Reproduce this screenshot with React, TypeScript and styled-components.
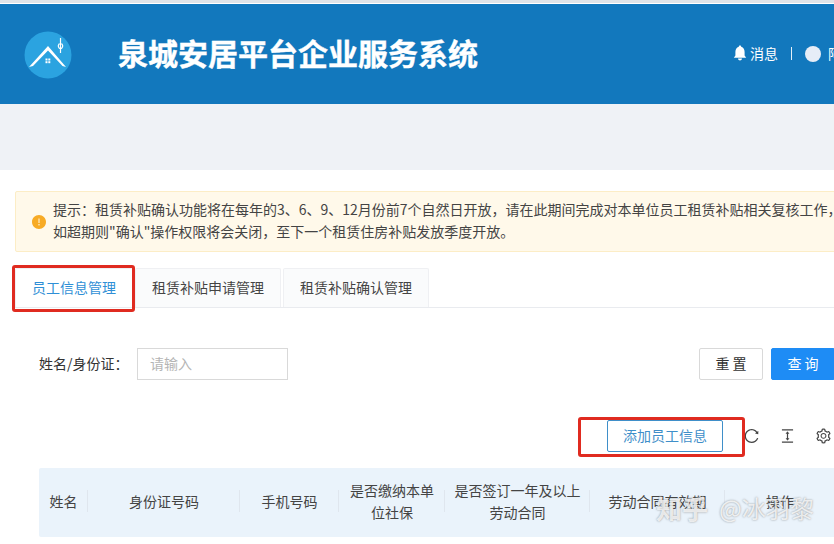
import styled, { createGlobalStyle } from "styled-components";
import {
  AiFillExclamationCircle,
  AiOutlineColumnHeight,
  AiOutlineReload,
  AiOutlineSetting,
} from "react-icons/ai";

const GlobalStyle = createGlobalStyle`
  html, body {
    margin: 0;
    width: 834px;
    height: 544px;
    overflow: hidden;
    background: #fff;
  }
  * {
    box-sizing: border-box;
  }
  body {
    font-family: "Noto Sans CJK SC", "Liberation Sans", sans-serif;
    color: #333;
  }
`;

const Page = styled.div`
  position: relative;
  width: 834px;
  height: 544px;
  overflow: hidden;
  background: #fff;
  padding-top: 4px;
`;

const TopLine = styled.div`
  height: 3px;
  margin-top: -4px;
  margin-bottom: 1px;
  background: #dfe3e8;
`;

const Header = styled.header`
  height: 100px;
  background: #1278bd;
  display: flex;
  align-items: center;
  padding-left: 24px;
  white-space: nowrap;
`;

const Logo = styled.svg`
  width: 48px;
  height: 48px;
  flex: none;
  margin-top: 2px;
`;

const Title = styled.h1`
  margin: -4px 0 0 46px;
  width: 615px;
  flex: none;
  font-size: 30px;
  line-height: 40px;
  font-weight: 700;
  color: #fff;
  -webkit-text-stroke: 0.4px #fff;
`;

const HeaderTools = styled.div`
  display: flex;
  align-items: center;
  color: #fff;
  font-size: 14px;
  flex: none;
  margin-top: -2px;
`;

const Bell = styled.svg`
  width: 14px;
  height: 16px;
  margin-right: 3px;
`;

const Divider = styled.span`
  width: 1px;
  height: 13px;
  background: #e4eff8;
  margin: 0 13px;
`;

const Avatar = styled.span`
  width: 16px;
  height: 16px;
  border-radius: 50%;
  background: #e6edf7;
  margin: 2px 7px 0 0;
`;

const Band = styled.div`
  height: 66px;
  background: #eff2f6;
`;

const Content = styled.main`
  padding: 21px 0 0 15px;
  width: 1100px;
`;

const Alert = styled.div`
  height: 61px;
  display: flex;
  align-items: center;
  gap: 6px;
  padding: 0 0 3px 15px;
  background: #fff9ea;
  border: 1px solid #fcedc6;
  border-radius: 2px;
  font-size: 14px;
  line-height: 22px;
  color: #444;
  white-space: nowrap;
`;

const AlertIcon = styled(AiFillExclamationCircle)`
  color: #f7ab25;
  font-size: 16px;
  flex: none;
  margin-top: 3px;
`;

const Tabs = styled.div`
  display: flex;
  align-items: flex-end;
  gap: 2px;
  height: 43px;
  margin-top: 13px;
  border-bottom: 1px solid #e9ebef;
`;

const Tab = styled.div<{ $active?: boolean }>`
  width: ${(p) => (p.$active ? "118px" : "146px")};
  height: 39px;
  display: flex;
  align-items: center;
  justify-content: center;
  padding-bottom: 2px;
  font-size: 14px;
  color: ${(p) => (p.$active ? "#2f8fd6" : "#444")};
  background: ${(p) => (p.$active ? "#fff" : "#fafbfc")};
  border: 1px solid #eff0f3;
  border-bottom: 0;
  border-radius: 2px 2px 0 0;
`;

const Filter = styled.div`
  display: flex;
  align-items: center;
  height: 32px;
  margin-top: 40px;
  padding-left: 24px;
`;

const FieldLabel = styled.label`
  font-size: 14px;
  color: #333;
  width: 98px;
  flex: none;
  padding-bottom: 2px;
`;

const FakeInput = styled.div`
  width: 151px;
  height: 32px;
  border: 1px solid #d9d9d9;
  padding-left: 12px;
  font-size: 14px;
  line-height: 29px;
  color: #b5b5b5;
  flex: none;
`;

const Button = styled.button<{ $primary?: boolean }>`
  width: 64px;
  height: 32px;
  flex: none;
  padding: 0 0 2px 3px;
  font-family: inherit;
  font-size: 14px;
  letter-spacing: 3px;
  border-radius: 2px;
  border: 1px solid ${(p) => (p.$primary ? "#1e8cf5" : "#d9d9d9")};
  background: ${(p) => (p.$primary ? "#1e8cf5" : "#fff")};
  color: ${(p) => (p.$primary ? "#fff" : "#333")};
  margin-left: ${(p) => (p.$primary ? "8px" : "0")};
`;

const ResetButton = styled(Button)`
  margin-left: 411px;
`;

const Toolbar = styled.div`
  display: flex;
  align-items: center;
  height: 32px;
  margin-top: 40px;
  padding-left: 592px;
  color: #444;
`;

const AddButton = styled.button`
  width: 116px;
  height: 32px;
  flex: none;
  padding: 0 0 3px;
  font-family: inherit;
  font-size: 14px;
  color: #3f8fc9;
  background: #fff;
  border: 1px solid #3f8fc9;
  border-radius: 2px;
  margin-right: 20px;
`;

const ToolIcon = styled.span`
  display: flex;
  justify-content: center;
  width: 17px;
  font-size: 18px;
  margin-right: 19px;
  flex: none;
`;

const TableHead = styled.div`
  display: flex;
  align-items: center;
  width: 900px;
  height: 69px;
  margin: 16px 0 0 24px;
  padding-bottom: 3px;
  background: #eaf3fb;
  border-radius: 2px 0 0 2px;
`;

const HeadCell = styled.div<{ $width: number }>`
  position: relative;
  width: ${(p) => p.$width}px;
  flex: none;
  padding: 0 6px;
  text-align: center;
  font-size: 14px;
  line-height: 22px;
  color: #444;

  &:not(:last-child)::after {
    content: "";
    position: absolute;
    right: 0;
    top: 50%;
    height: 22px;
    margin-top: -11px;
    width: 1px;
    background: #dfe6ee;
  }
`;

const Watermark = styled.div`
  position: absolute;
  left: 656px;
  top: 489px;
  display: flex;
  align-items: center;
  gap: 11px;
  white-space: nowrap;
  color: rgba(255, 255, 255, 0.78);
  text-shadow: 0 0 2px rgba(90, 90, 90, 0.65);
`;

const WatermarkBrand = styled.span`
  font-size: 26px;
  line-height: 38px;
  font-weight: 700;
`;

const WatermarkName = styled.span`
  font-size: 24px;
  line-height: 38px;
`;

const RedBox = styled.div<{ $left: number; $top: number; $width: number; $height: number }>`
  position: absolute;
  left: ${(p) => p.$left}px;
  top: ${(p) => p.$top}px;
  width: ${(p) => p.$width}px;
  height: ${(p) => p.$height}px;
  border: 3px solid #e02b20;
  border-radius: 3px;
`;

const columns = [
  { width: 49, label: "姓名" },
  { width: 152, label: "身份证号码" },
  { width: 99, label: "手机号码" },
  { width: 106, label: "是否缴纳本单位社保" },
  { width: 145, label: "是否签订一年及以上劳动合同" },
  { width: 135, label: "劳动合同有效期" },
  { width: 110, label: "操作" },
];

// 全角标点
const notice1 =
  "提示\uFF1A租赁补贴确认功能将在每年的3、6、9、12月份前7个自然日开放\uFF0C请在此期间完成对本单位员工租赁补贴相关复核工作\uFF0C";
const notice2 = "如超期则\"确认\"操作权限将会关闭\uFF0C至下一个租赁住房补贴发放季度开放。";

export default function App() {
  return (
    <Page>
      <GlobalStyle />
      <TopLine />
      <Header>
        <Logo viewBox="0 0 48 48">
          <circle cx="24" cy="24" r="23.5" fill="#2ba3e0" />
          <path d="M5 36 L24 15 L42 36 L38.5 35 L24 19.5 L9 35 Z" fill="#fff" />
          <rect x="21.5" y="27.5" width="2" height="2" fill="#fff" />
          <rect x="24.3" y="27.5" width="2" height="2" fill="#fff" />
          <rect x="21.5" y="30.2" width="2" height="2" fill="#fff" />
          <rect x="24.3" y="30.2" width="2" height="2" fill="#fff" />
          <path
            d="M36.5 7 L36.5 22 M35 13 C33.5 15 34.5 17 36.5 18 C38.5 17 39.5 15 38 13 Z"
            fill="none"
            stroke="#fff"
            strokeWidth="1.2"
          />
        </Logo>
        <Title>泉城安居平台企业服务系统</Title>
        <HeaderTools>
          <Bell viewBox="0 0 14 16">
            <path
              d="M7 0.5 C7.8 0.5 8.2 1 8.2 1.8 C10.6 2.5 11.6 4.5 11.6 7 L11.6 10.5 L13.2 12.8 L0.8 12.8 L2.4 10.5 L2.4 7 C2.4 4.5 3.4 2.5 5.8 1.8 C5.8 1 6.2 0.5 7 0.5 Z M5 13.6 L9 13.6 C8.8 15 8 15.5 7 15.5 C6 15.5 5.2 15 5 13.6 Z"
              fill="#fff"
            />
          </Bell>
          消息
          <Divider />
          <Avatar />
          阿
        </HeaderTools>
      </Header>
      <Band />
      <Content>
        <Alert>
          <AlertIcon />
          <div>
            <div>{notice1}</div>
            <div>{notice2}</div>
          </div>
        </Alert>
        <Tabs>
          <Tab $active>员工信息管理</Tab>
          <Tab>租赁补贴申请管理</Tab>
          <Tab>租赁补贴确认管理</Tab>
        </Tabs>
        <Filter>
          <FieldLabel>{"姓名/身份证\uFF1A"}</FieldLabel>
          <FakeInput>请输入</FakeInput>
          <ResetButton>重置</ResetButton>
          <Button $primary>查询</Button>
        </Filter>
        <Toolbar>
          <AddButton>添加员工信息</AddButton>
          <ToolIcon>
            <AiOutlineReload />
          </ToolIcon>
          <ToolIcon>
            <AiOutlineColumnHeight />
          </ToolIcon>
          <ToolIcon>
            <AiOutlineSetting />
          </ToolIcon>
        </Toolbar>
        <TableHead>
          {columns.map((c) => (
            <HeadCell key={c.label} $width={c.width}>
              {c.label}
            </HeadCell>
          ))}
        </TableHead>
      </Content>
      <RedBox $left={12} $top={265} $width={123} $height={47} />
      <RedBox $left={578} $top={417} $width={167} $height={40} />
      <Watermark>
        <WatermarkBrand>知乎</WatermarkBrand>
        <WatermarkName>@冰羽黎</WatermarkName>
      </Watermark>
    </Page>
  );
}
